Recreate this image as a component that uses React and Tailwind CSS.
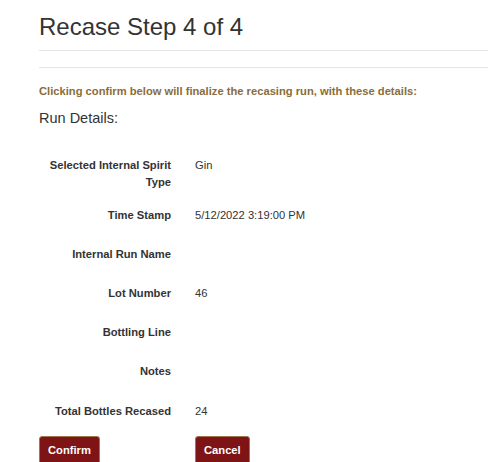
import React from "react";

const details = [
  { label: "Selected Internal Spirit Type", value: "Gin", h: "h-[50px]" },
  { label: "Time Stamp", value: "5/12/2022 3:19:00 PM", h: "h-[39px]" },
  { label: "Internal Run Name", value: "", h: "h-[39px]" },
  { label: "Lot Number", value: "46", h: "h-[39px]" },
  { label: "Bottling Line", value: "", h: "h-[39px]" },
  { label: "Notes", value: "", h: "h-[40px]" },
  { label: "Total Bottles Recased", value: "24", h: "h-[33px]" },
];

export default function App() {
  return (
    <div
      className="min-h-[462px] bg-white pl-[39px] text-[#333333] overflow-hidden"
      style={{ fontFamily: '"Liberation Sans", Arial, sans-serif' }}
    >
      {/* page header */}
      <div className="border-b border-[#e5e5e5] pt-[14px] pb-[10px]">
        <h1 className="text-[24px] leading-[1.1]">Recase Step 4 of 4</h1>
      </div>
      <hr className="mt-[16px] border-t border-[#e5e5e5]" />

      <p className="mt-[15px] text-[11.2px] leading-[17px] font-bold text-[#8a6d3b]">
        Clicking confirm below will finalize the recasing run, with these details:
      </p>
      <h4 className="mt-[10px] text-[14.5px] leading-[17px]">Run Details:</h4>

      {/* details table */}
      <div className="mt-[30px] grid grid-cols-[132px_1fr] gap-x-[24px] text-[11.2px] leading-[17px]">
        {details.map((d) => (
          <React.Fragment key={d.label}>
            <div className={`text-right font-bold ${d.h}`}>{d.label}</div>
            <div>{d.value}</div>
          </React.Fragment>
        ))}
        <div>
          <button className="rounded-[3px] border border-[#a0764f] bg-[#7e1416] px-[8px] py-[5px] text-[11.2px] leading-[17px] font-bold text-white">
            Confirm
          </button>
        </div>
        <div>
          <button className="rounded-[3px] border border-[#a0764f] bg-[#7e1416] px-[8px] py-[5px] text-[11.2px] leading-[17px] font-bold text-white">
            Cancel
          </button>
        </div>
      </div>
    </div>
  );
}
